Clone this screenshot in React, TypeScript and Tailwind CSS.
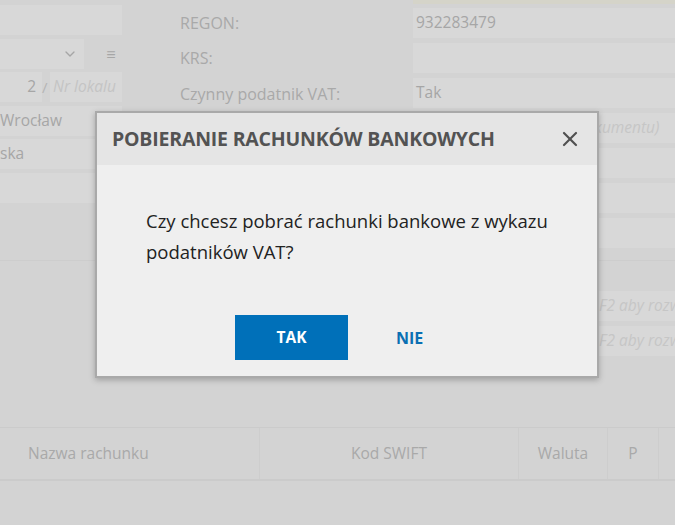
import React from 'react';
import { X, ChevronDown } from 'lucide-react';

const font = { fontFamily: '"Open Sans", "Noto Sans", sans-serif' };

function Field({ children, className = '' }: { children?: React.ReactNode; className?: string }) {
	return (
		<div className={`h-[30px] bg-[#d8d8d8] flex items-center text-[15.5px] text-[#a6a6a6] ${className}`}>
			{children}
		</div>
	);
}

export default function App() {
	return (
		<div className="relative w-[675px] h-[525px] overflow-hidden bg-[#d3d3d3]" style={font}>
			{/* Dimmed form in the background */}
			<div className="flex">
				{/* Left column */}
				<div className="w-[122px] flex flex-col gap-[3.5px] pt-[5px]">
					<Field />
					<div className="flex h-[30px]">
						<div className="w-[84px] bg-[#d8d8d8] flex items-center justify-end pr-[6px]">
							<ChevronDown size={16} className="text-[#a6a6a6]" />
						</div>
						<div className="flex-1 flex items-center justify-center text-[#a6a6a6] text-[16px] pl-[16px]">≡</div>
					</div>
					<div className="flex h-[30px] items-center">
						<div className="w-[42px] h-full bg-[#d8d8d8] flex items-center justify-end pr-[6px] text-[15.5px] text-[#a6a6a6]">2</div>
						<span className="w-[8px] text-[15px] text-[#b5b5b5]">/</span>
						<div className="flex-1 h-full bg-[#d8d8d8] flex items-center pl-[3px] italic text-[15.5px] text-[#c4c4c4] whitespace-nowrap overflow-hidden">Nr lokalu</div>
					</div>
					<Field className="whitespace-nowrap">Wrocław</Field>
					<Field className="whitespace-nowrap">ska</Field>
					<Field />
				</div>

				{/* Labels */}
				<div className="w-[291px] flex flex-col pt-[5px] pl-[58px] text-[16px] text-[#a9a9a9] whitespace-nowrap">
					<div className="h-[35px] flex items-center">REGON:</div>
					<div className="h-[36px] flex items-center">KRS:</div>
					<div className="h-[36px] flex items-center">Czynny podatnik VAT:</div>
				</div>

				{/* Right column */}
				<div className="flex-1 flex flex-col">
					<div className="h-[4px] bg-[#d5d4c9]" />
					<div className="flex flex-col gap-[5px] pt-[4px]">
						<Field className="pl-[3px]">932283479</Field>
						<Field />
						<Field className="pl-[3px]">Tak</Field>
						<Field className="pl-[110px] italic text-[#c6c6c6] whitespace-nowrap overflow-hidden">(numer dokumentu)</Field>
						<Field />
						<Field />
						<Field />
					</div>
				</div>
			</div>

			<div className="mt-[12px] border-t border-[#cdcdcd]" />

			<div className="flex justify-end">
				<div className="w-[262px] flex flex-col gap-[5px] pt-[30px]">
					<Field className="pl-[128px] italic text-[#c6c6c6] whitespace-nowrap overflow-hidden">Naciśnij F2 aby rozwinąć</Field>
					<Field className="pl-[128px] italic text-[#c6c6c6] whitespace-nowrap overflow-hidden">Naciśnij F2 aby rozwinąć</Field>
				</div>
			</div>

			{/* Table header */}
			<div className="mt-[71px] border-t border-[#cbcbcb] border-b-2 border-b-[#cbcbcb] h-[54px] flex text-[15.5px] text-[#a9a9a9]">
				<div className="w-[260px] flex items-center pl-[28px] border-r border-[#cdcdcd]">Nazwa rachunku</div>
				<div className="w-[259px] flex items-center justify-center border-r border-[#cdcdcd]">Kod SWIFT</div>
				<div className="w-[89px] flex items-center justify-center border-r border-[#cdcdcd]">Waluta</div>
				<div className="w-[51px] flex items-center justify-center border-r border-[#cdcdcd]">P</div>
				<div className="flex-1" />
			</div>

			{/* Modal */}
			<div className="absolute left-[95px] top-[111px] w-[504px] h-[267px] border-2 border-[#a9a9a9] bg-[#efefef] shadow-[0_2px_6px_rgba(0,0,0,0.25)] flex flex-col">
				<div className="h-[52px] bg-[#e5e5e5] flex items-center justify-between pl-[15px] pr-[15px]">
					<span className="text-[19.5px] font-bold text-[#535353] tracking-[-0.2px]">POBIERANIE RACHUNKÓW BANKOWYCH</span>
					<X size={24} strokeWidth={2.2} className="text-[#505050]" />
				</div>
				<div className="flex-1 flex flex-col">
					<p className="mt-[40px] pl-[49px] pr-[30px] text-[18.5px] leading-[31px] text-[#222]">
						Czy chcesz pobrać rachunki bankowe z wykazu podatników VAT?
					</p>
					<div className="mt-auto mb-[16px] flex items-center pl-[138px] gap-[48px]">
						<button className="w-[113px] h-[45px] bg-[#0070b9] text-white text-[15.5px] font-bold">TAK</button>
						<button className="text-[16px] font-bold text-[#0a6fb3]">NIE</button>
					</div>
				</div>
			</div>
		</div>
	);
}
